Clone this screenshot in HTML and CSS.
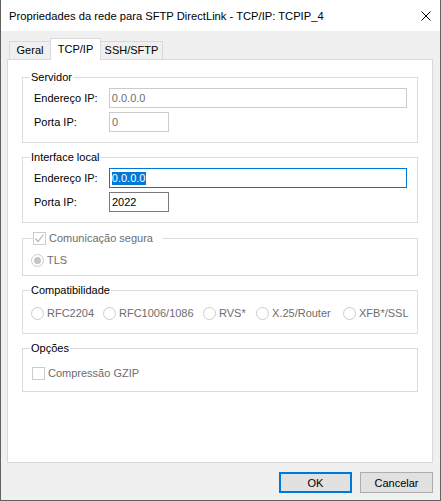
FILE: index.html
```html
<!DOCTYPE html>
<html lang="pt">
<head>
<meta charset="utf-8">
<title>Propriedades da rede</title>
<link rel="stylesheet" href="styles.css">
</head>
<body>
<div class="window">
  <div class="titlebar">
    <span class="title">Propriedades da rede para SFTP DirectLink - TCP/IP: TCPIP_4</span>
    <svg class="close" width="10" height="10" viewBox="0 0 10 10"><path d="M0.5 0.5L9.5 9.5M9.5 0.5L0.5 9.5" stroke="#000" stroke-width="1" fill="none"/></svg>
  </div>
  <div class="client">
    <div class="tabs">
      <div class="tab tab-geral">Geral</div>
      <div class="tab tab-tcp active">TCP/IP</div>
      <div class="tab tab-ssh">SSH/SFTP</div>
    </div>
    <div class="panel">
      <fieldset class="group">
        <legend>Servidor</legend>
        <div class="rows">
          <div class="row"><span class="label">Endereço IP:</span><div class="field wide disabled">0.0.0.0</div></div>
          <div class="row"><span class="label">Porta IP:</span><div class="field short disabled">0</div></div>
        </div>
      </fieldset>
      <fieldset class="group">
        <legend>Interface local</legend>
        <div class="rows">
          <div class="row"><span class="label">Endereço IP:</span><div class="field wide focus"><span class="sel">0.0.0.0</span></div></div>
          <div class="row"><span class="label">Porta IP:</span><div class="field short">2022</div></div>
        </div>
      </fieldset>
      <fieldset class="group group-secure">
        <legend class="check-legend">
          <span class="checkbox"><svg width="11" height="11" viewBox="0 0 11 11"><path d="M1.5 5.5L4 8.5L9.5 1.5" stroke="#b4b4b4" stroke-width="1.2" fill="none"/></svg></span>
          <span class="dim">Comunicação segura</span>
        </legend>
        <div class="opt-row">
          <span class="radio on"></span><span class="dim">TLS</span>
        </div>
      </fieldset>
      <fieldset class="group">
        <legend>Compatibilidade</legend>
        <div class="compat">
          <div class="item"><span class="radio"></span><span class="dim">RFC2204</span></div>
          <div class="item"><span class="radio"></span><span class="dim">RFC1006/1086</span></div>
          <div class="item"><span class="radio"></span><span class="dim">RVS*</span></div>
          <div class="item"><span class="radio"></span><span class="dim">X.25/Router</span></div>
          <div class="item"><span class="radio"></span><span class="dim">XFB*/SSL</span></div>
        </div>
      </fieldset>
      <fieldset class="group">
        <legend>Opções</legend>
        <div class="opt-row opt-gzip">
          <span class="checkbox"></span><span class="dim">Compressão GZIP</span>
        </div>
      </fieldset>
    </div>
    <div class="buttons">
      <button class="btn default">OK</button>
      <button class="btn">Cancelar</button>
    </div>
  </div>
</div>
</body>
</html>
```
FILE: styles.css
```css
* { box-sizing: border-box; }
body {
  margin: 0;
  font-family: "Liberation Sans", Arial, sans-serif;
  font-size: 11px;
  color: #000;
  background: #fff;
}
.window {
  width: 441px;
  height: 501px;
  border: 1px solid #616161;
  border-top: 0;
  display: flex;
  flex-direction: column;
  background: #f0f0f0;
}
.titlebar {
  height: 31px;
  flex: none;
  background: #fff;
  display: flex;
  align-items: center;
  justify-content: space-between;
  padding: 1px 9px 0 8px;
  font-size: 11.2px;
}
.close { display: block; }
.client {
  flex: 1;
  display: flex;
  flex-direction: column;
  padding-top: 7px;
}
.tabs {
  height: 21px;
  display: flex;
  align-items: flex-end;
  padding-left: 8px;
}
.tab {
  height: 18px;
  border: 1px solid #d9d9d9;
  border-bottom: 0;
  line-height: 16px;
  text-align: center;
  background: #f0f0f0;
}
.tab-geral { width: 42px; }
.tab-tcp { width: 51px; margin-left: -1px; }
.tab-ssh { width: 63px; margin-left: -1px; }
.tab.active {
  height: 22px;
  background: #fff;
  padding-top: 2px;
  margin-bottom: -1px;
  position: relative;
  z-index: 1;
}
.panel {
  height: 404px;
  margin: 0 7px 0 6px;
  background: #fff;
  border: 1px solid #d9d9d9;
  padding: 10px 14px 0;
}
.group {
  margin: 0;
  padding: 0;
  border: 1px solid #dcdcdc;
  min-width: 0;
}
.group + .group { margin-top: 7px; }
.group-secure { margin-top: 8px !important; }
legend {
  margin-left: 7px;
  padding: 0 1px;
  height: 14px;
  line-height: 14px;
}
.check-legend {
  margin-left: 10px;
  padding: 0 9px 0 0;
  display: flex;
  align-items: center;
  gap: 3px;
}
.rows {
  padding: 4px 10px 10px 11px;
  display: flex;
  flex-direction: column;
  gap: 4px;
}
.row {
  height: 20px;
  display: flex;
  align-items: center;
}
.label { width: 75px; }
.field {
  height: 20px;
  border: 1px solid #7a7a7a;
  background: #fff;
  padding-left: 2px;
  line-height: 18px;
}
.field.wide { width: 299px; }
.field.short { width: 60px; }
.field.disabled { border-color: #cccccc; color: #6d6d6d; }
.field.focus { border-color: #0078d7; }
.sel {
  background: #0078d7;
  color: #fff;
  display: inline-block;
  line-height: 13px;
  padding: 0 1px 0 0;
}
.dim { color: #6d6d6d; }
.opt-row {
  height: 16px;
  margin: 7px 0;
  padding-left: 8px;
  display: flex;
  align-items: center;
  gap: 3px;
}
.opt-gzip { margin: 10px 0; padding-left: 9px; }
.compat {
  padding: 8px 0 12px 8px;
  display: grid;
  grid-template-columns: 72px 100px 53px 87px auto;
}
.item {
  height: 16px;
  display: flex;
  align-items: center;
  gap: 3px;
}
.radio {
  width: 13px;
  height: 13px;
  flex: none;
  border: 1px solid #cccccc;
  border-radius: 50%;
  background: #fff;
  display: flex;
  align-items: center;
  justify-content: center;
}
.radio.on::after {
  content: "";
  width: 7px;
  height: 7px;
  border-radius: 50%;
  background: #c4c4c4;
}
.checkbox {
  width: 13px;
  height: 13px;
  flex: none;
  border: 1px solid #cccccc;
  background: #fff;
  display: flex;
  align-items: center;
  justify-content: center;
}
.checkbox svg { display: block; }
.buttons {
  display: flex;
  justify-content: flex-end;
  gap: 8px;
  padding: 9px 7px 0 0;
}
.btn {
  width: 73px;
  height: 21px;
  padding: 0;
  margin: 0;
  font: inherit;
  color: #000;
  background: #e1e1e1;
  border: 1px solid #adadad;
  border-radius: 0;
}
.btn.default { border: 2px solid #0078d7; }
```
